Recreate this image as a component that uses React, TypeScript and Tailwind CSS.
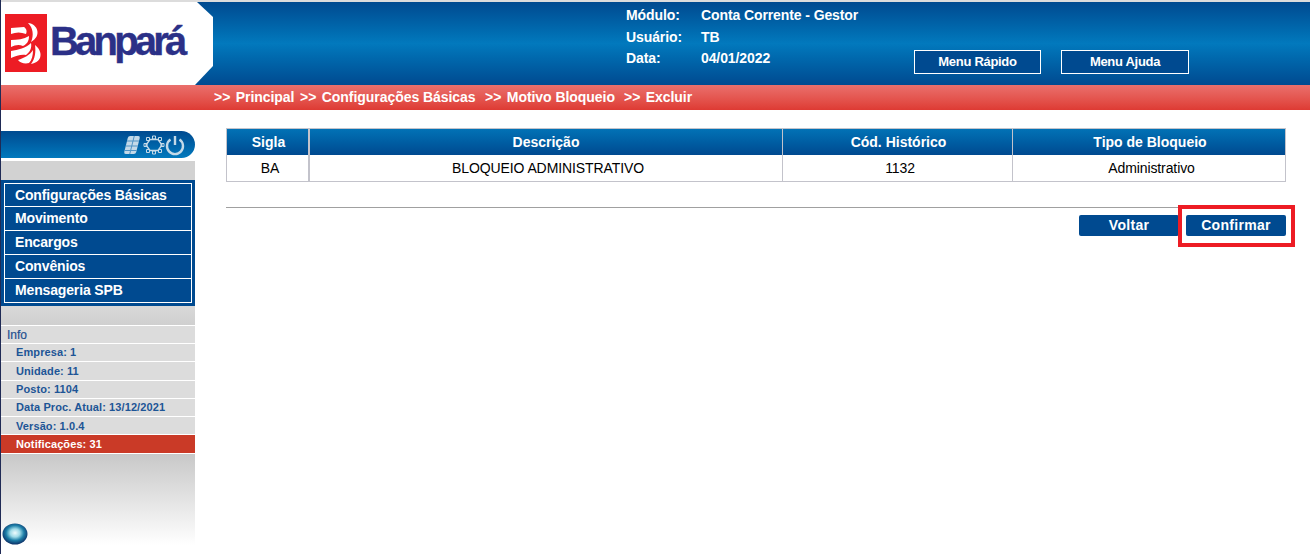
const menuItems = ['Configurações Básicas', 'Movimento', 'Encargos', 'Convênios', 'Mensageria SPB'];
const infoItems = ['Empresa: 1', 'Unidade: 11', 'Posto: 1104', 'Data Proc. Atual: 13/12/2021', 'Versão: 1.0.4'];
const crumbs = [
  { label: 'Principal', w: 'w-[86px]' },
  { label: 'Configurações Básicas', w: 'w-[185px]' },
  { label: 'Motivo Bloqueio', w: 'w-[139px]' },
  { label: 'Excluir', w: 'w-[70px]' },
];

function BanparaLogo() {
  return (
    <div className="flex h-[83px] w-[212px] shrink-0 items-start bg-white pl-[4px] pt-[12px] [clip-path:polygon(0_0,196px_0,212px_15px,212px_64px,194px_83px,0_83px)]">
      <svg width="42" height="58" viewBox="0 0 42 58" className="shrink-0">
        <rect width="42" height="58" fill="#ed1c24" />
        <g fill="#fff">
          <path d="M6 14 L19 13 C22 15 22 18 21 20 C16 18 11 18 6 20 Z" />
          <path d="M6 26 C12 26 19 25 24 22 C24 27 22 30 18 32 C14 30 10 31 6 33 Z" />
          <path d="M6 37 C13 36 21 34 26 29 C27 34 25 38 21 41 C16 40 11 42 6 44 Z" />
          <path d="M13 46 C19 44 25 41 28 36 C28 41 27 46 24 49 C20 50 15 49 13 46 Z" />
          <path d="M23 9 C33 10 37 22 26 28 C29 21 28 14 23 9 Z" />
          <path d="M30 31 C38 37 38 48 26 50 C30 45 31 38 30 31 Z" />
        </g>
      </svg>
      <span className="ml-[3px] mt-[3px] font-['Liberation_Sans',sans-serif] text-[40px] leading-[48px] tracking-[-3.8px] text-[#2b3087] [-webkit-text-stroke:0.4px_#2b3087]">
        Banpará
      </span>
    </div>
  );
}

function HeaderInfo({ label, value }: { label: string; value: string }) {
  return (
    <div className="flex h-[21.5px] items-center">
      <span className="w-[75px]">{label}</span>
      <span>{value}</span>
    </div>
  );
}

function SidebarIcons() {
  return (
    <svg width="64" height="24" viewBox="0 0 64 24" fill="none" stroke="#c3d9e8" className="mr-[8px]">
      <g transform="skewX(-14) translate(3 0)">
        <rect x="3" y="3" width="12" height="18" rx="2" fill="#c3d9e8" stroke="none" />
        <path d="M3 8h12M3 13h12M3 17.500h12M9 3v18" stroke="#4f93c4" strokeWidth="1" />
      </g>
      <path d="M27 6.500h8l4 5.500-4 5.500h-8l-4-5.500z" strokeWidth="1.400" />
      <path d="M29.500 3h3v3h-3zM29.500 18h3v3h-3zM21 10.500h3v3h-3zM38 10.500h3v3h-3zM23.500 4.500h3v3h-3zM35.500 4.500h3v3h-3zM23.500 16.500h3v3h-3zM35.500 16.500h3v3h-3z" strokeWidth="1" />
      <path d="M47.500 6.500a8 8 0 1 0 9 0" strokeWidth="2.400" />
      <path d="M52 3v9" strokeWidth="2.400" />
    </svg>
  );
}

export default function App() {
  return (
    <div className="flex h-[554px] w-[1310px] flex-col overflow-hidden border-l border-[#1f2a55] bg-white font-['Liberation_Sans',sans-serif]">
      <div className="h-[2px] shrink-0 bg-[#dcdcdc]" />
      <header className="flex h-[83px] shrink-0 bg-gradient-to-b from-[#004a90] via-[#0279bd] via-50% to-[#004a90] text-[14px] font-bold tracking-[-0.1px] text-white">
        <BanparaLogo />
        <div className="ml-[413px] w-[288px] shrink-0 pt-[3px]">
          <HeaderInfo label="Módulo:" value="Conta Corrente - Gestor" />
          <HeaderInfo label="Usuário:" value="TB" />
          <HeaderInfo label="Data:" value="04/01/2022" />
        </div>
        <div className="flex items-start gap-[20px] self-start pt-[48px]">
          <button className="h-[24px] w-[127px] border border-white bg-[#004a90] text-[13px] tracking-[-0.3px]">Menu Rápido</button>
          <button className="h-[24px] w-[128px] border border-white bg-[#004a90] text-[13px] tracking-[-0.3px]">Menu Ajuda</button>
        </div>
      </header>

      <nav className="flex h-[25px] shrink-0 items-center bg-gradient-to-b from-[#ea6f6c] to-[#de3a33] pl-[213px] text-[14px] font-bold tracking-[-0.05px] text-white">
        {crumbs.map((c) => (
          <span key={c.label} className={`${c.w} whitespace-nowrap`}>
            <span className="mr-[5.5px]">&gt;&gt;</span>
            {c.label}
          </span>
        ))}
      </nav>

      <div className="flex flex-1">
        <aside className="mt-[21px] flex h-[414px] w-[194px] shrink-0 flex-col">
          <div className="flex h-[27px] shrink-0 items-center justify-end rounded-r-[14px] bg-gradient-to-b from-[#004a90] to-[#0279bd]">
            <SidebarIcons />
          </div>
          <div className="mt-[3px] h-[19px] shrink-0 bg-[#d2d2d2]" />
          <ul className="flex h-[126px] shrink-0 flex-col bg-[#004a90] px-[3px] py-[3px]">
            {menuItems.map((item) => (
              <li key={item} className="flex h-[24px] items-center border-x border-b border-white pl-[10px] text-[14px] font-bold tracking-[-0.15px] text-white first:border-t">{item}</li>
            ))}
          </ul>
          <div className="h-[19px] shrink-0 bg-gradient-to-b from-[#d9d9d9] to-[#cfcfcf]" />
          <div className="flex shrink-0 flex-col border-t border-white text-[11px] font-bold text-[#1d5596]">
            <div className="flex h-[18px] items-center border-b border-white bg-[#dcdcdc] pl-[6px] text-[12px] font-normal text-[#24508f] [-webkit-text-stroke:0.2px_#24508f]">Info</div>
            {infoItems.map((item) => (
              <div key={item} className="flex h-[18.3px] items-center border-b border-white bg-[#dcdcdc] pl-[15px] tracking-[0.1px]">{item}</div>
            ))}
            <div className="flex h-[19px] items-center border-b border-white bg-[#ca3a27] pl-[15px] tracking-[0.1px] text-white">Notificações: 31</div>
          </div>
          <div className="flex flex-1 items-end bg-gradient-to-b from-[#c8c8c8] to-white">
            <svg width="26" height="22" viewBox="0 0 26 22" className="ml-px">
              <defs>
                <radialGradient id="orb" cx="0.5" cy="0.45" r="0.55">
                  <stop offset="0" stopColor="#f0fbfd" />
                  <stop offset="0.35" stopColor="#9fdbe8" />
                  <stop offset="0.65" stopColor="#1d7fa8" />
                  <stop offset="1" stopColor="#0c2f66" />
                </radialGradient>
              </defs>
              <ellipse cx="13" cy="11" rx="12.500" ry="10.500" fill="url(#orb)" />
            </svg>
          </div>
        </aside>

        <main className="ml-[31px] mt-[18px] flex-1">
          <div className="w-[1060px] border border-[#c3c3cb] text-[14px]">
            <div className="grid h-[26px] grid-cols-[83px_473px_230px_1fr] bg-gradient-to-b from-[#0272b6] to-[#004a90] font-bold text-white">
              <div className="flex items-center justify-center border-r-2 border-[#c3c3cb] pl-[2px]">Sigla</div>
              <div className="flex items-center justify-center border-r border-[#c3c3cb]">Descrição</div>
              <div className="flex items-center justify-center border-r border-[#c3c3cb] pl-[2px]">Cód. Histórico</div>
              <div className="flex items-center justify-center pl-[2px]">Tipo de Bloqueio</div>
            </div>
            <div className="grid h-[26px] grid-cols-[83px_473px_230px_1fr] tracking-[-0.1px] text-black">
              <div className="flex items-center justify-center border-r-2 border-[#c3c3cb] pl-[5px]">BA</div>
              <div className="flex items-center justify-center border-r border-[#c3c3cb] pl-[4px]">BLOQUEIO ADMINISTRATIVO</div>
              <div className="flex items-center justify-center border-r border-[#c3c3cb] pl-[5px]">1132</div>
              <div className="flex items-center justify-center pl-[5px]">Administrativo</div>
            </div>
          </div>
          <div className="mt-[25px] w-[1059px] border-t border-[#a0a0a0]" />
          <div className="mt-[7px] flex w-[1069px] items-start justify-end">
            <button className="mr-[-1px] h-[21px] w-[100px] rounded-[2px] bg-[#004a90] text-[14px] font-bold tracking-[0.3px] text-white">Voltar</button>
            <div className="relative mt-[-10px] border-[4px] border-[#ed1c24] pb-[7px] pl-[4px] pr-[5px] pt-[6px]">
              <button className="block h-[21px] w-[100px] rounded-[2px] bg-[#004a90] text-[14px] font-bold tracking-[0.3px] text-white">Confirmar</button>
            </div>
          </div>
        </main>
      </div>
    </div>
  );
}
